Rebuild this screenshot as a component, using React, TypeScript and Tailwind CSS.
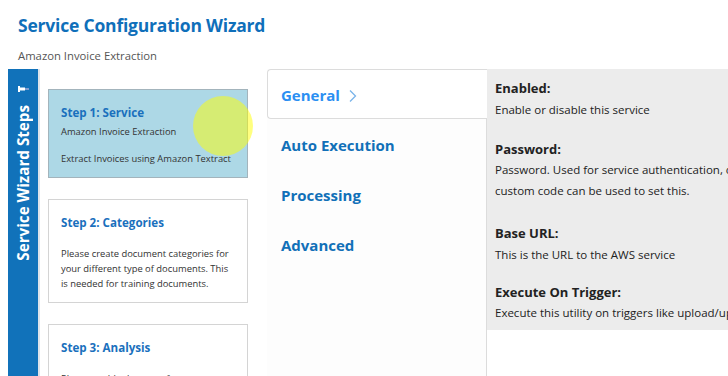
import React from "react";

const font = { fontFamily: '"Open Sans", "Noto Sans", sans-serif' };

function StepCard({
  title,
  active,
  children,
  h,
}: {
  title: string;
  active?: boolean;
  children: React.ReactNode;
  h: string;
}) {
  return (
    <div
      className={`w-[200px] ${h} shrink-0 border px-[12px] pt-[13px] ${
        active ? "bg-[#add8e6] border-[#a3b4bc]" : "bg-white border-[#d4d4d4]"
      }`}
    >
      <div className="text-[11.6px] font-bold text-[#1a70bd] leading-[20px]">{title}</div>
      {children}
    </div>
  );
}

export default function App() {
  return (
    <div className="relative w-[728px] h-[376px] overflow-hidden bg-white" style={font}>
      <div className="pl-[18px] pt-[12px] h-[69px]">
        <div className="text-[17.5px] font-bold text-[#0f6fba] leading-[26px] tracking-[-0.2px]">
          Service Configuration Wizard
        </div>
        <div className="text-[11.3px] text-[#555] leading-[16px] mt-[10px]">Amazon Invoice Extraction</div>
      </div>

      <div className="flex h-[307px] pl-[8px]">
        {/* vertical sidebar */}
        <div className="w-[30px] bg-[#1172ba] flex flex-col items-center pt-[17px] shrink-0">
          <svg width="11" height="6" viewBox="0 0 11 6" className="ml-[1px]">
            <rect x="0" y="0" width="2" height="6" fill="white" />
            <rect x="2" y="1.5" width="5" height="3" fill="white" />
            <rect x="7" y="2.5" width="4" height="1" fill="#f0c8e8" />
          </svg>
          <div className="mt-[13px] [writing-mode:vertical-rl] rotate-180 text-white font-bold text-[15.2px] leading-[16px] whitespace-nowrap">
            Service Wizard Steps
          </div>
        </div>
        <div className="w-[2px] bg-[#dde3ea] shrink-0" />

        {/* steps */}
        <div className="pl-[8px] pt-[20px] flex flex-col gap-[21px] shrink-0">
          <StepCard title="Step 1: Service" active h="h-[89px]">
            <div className="text-[9.4px] text-[#333] leading-[15px] mt-[1px]">Amazon Invoice Extraction</div>
            <div className="text-[9.4px] text-[#333] leading-[15px] mt-[12px] whitespace-nowrap">
              Extract Invoices using Amazon Textract
            </div>
          </StepCard>
          <StepCard title="Step 2: Categories" h="h-[104px]">
            <div className="text-[9.4px] text-[#333] leading-[15px] mt-[13px] whitespace-nowrap">
              Please create document categories for
              <br />
              your different type of documents. This
              <br />
              is needed for training documents.
            </div>
          </StepCard>
          <StepCard title="Step 3: Analysis" h="h-[80px]">
            <div className="text-[9.4px] text-[#333] leading-[15px] mt-[13px] whitespace-nowrap">
              Please enable the steps for
            </div>
          </StepCard>
        </div>

        {/* tabs */}
        <div className="ml-[19px] w-[219px] shrink-0 flex flex-col bg-[#fdfdfd]">
          <div className="h-[50px] shrink-0 bg-white border border-r-0 border-[#dcdcdc] rounded-l-[4px] flex items-center pl-[13px] pt-[2px] text-[15px] font-bold text-[#2b8ff2] relative z-10 -mr-[1px]">
            General
            <svg width="10" height="14" viewBox="0 0 10 14" className="ml-[8px] mt-[2px]">
              <path d="M2 1.5 L7.5 7 L2 12.5" fill="none" stroke="#7ab4ea" strokeWidth="1.3" />
            </svg>
          </div>
          {["Auto Execution", "Processing", "Advanced"].map((t) => (
            <div key={t} className="h-[50px] shrink-0 flex items-center pl-[14px] pt-[2px] text-[15px] font-bold text-[#1170b8]">
              {t}
            </div>
          ))}
        </div>

        {/* panel */}
        <div className="flex-1 min-w-0 border-l border-[#dcdcdc]">
          <div className="bg-[#ececec] h-[261px] pl-[8px] pt-[9px] text-[#222] whitespace-nowrap overflow-hidden">
            <div className="text-[13px] font-bold leading-[20px]">Enabled:</div>
            <div className="text-[11.5px] leading-[21px] mt-[1px]">Enable or disable this service</div>
            <div className="text-[13px] font-bold leading-[20px] mt-[19px]">Password:</div>
            <div className="text-[11.5px] leading-[21px]">
              Password. Used for service authentication, or
              <br />
              custom code can be used to set this.
            </div>
            <div className="text-[13px] font-bold leading-[20px] mt-[22px]">Base URL:</div>
            <div className="text-[11.5px] leading-[21px] mt-[1px]">This is the URL to the AWS service</div>
            <div className="text-[13px] font-bold leading-[20px] mt-[17px]">Execute On Trigger:</div>
            <div className="text-[11.5px] leading-[21px]">Execute this utility on triggers like upload/update</div>
          </div>
        </div>
      </div>

      {/* cursor highlight */}
      <div className="absolute left-[193px] top-[96px] w-[60px] h-[60px] rounded-full bg-[rgba(255,255,0,0.5)] pointer-events-none" />
    </div>
  );
}
